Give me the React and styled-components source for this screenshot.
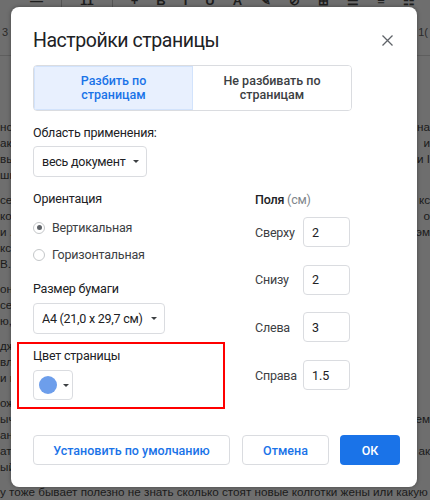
import React from 'react';
import styled, { createGlobalStyle } from 'styled-components';

const Global = createGlobalStyle`
  html, body { margin: 0; padding: 0; }
  body {
    width: 430px; height: 500px; overflow: hidden;
    background: #6f6f6f;
    font-family: Roboto, "Noto Sans", Arial, sans-serif;
  }
`;

const Screen = styled.div`
  position: relative;
  width: 430px;
  height: 500px;
  overflow: hidden;
  background: #6e6e6e;
`;

/* ---------- dimmed document behind ---------- */
const Doc = styled.div`
  display: flex;
  flex-direction: column;
  font-family: "Liberation Sans", Arial, sans-serif;
  font-size: 11.7px;
  color: #1b1b1b;
`;

const Toolbar = styled.div`
  display: flex;
  align-items: center;
  gap: 18px;
  height: 16px;
  margin-top: -8px;
  padding-left: 30px;
  font-size: 13px;
  font-weight: 700;
  color: #1e1e1e;
`;

const ToolSep = styled.span`
  width: 1px;
  height: 16px;
  background: #555;
`;

const RulerRow = styled.div`
  display: flex;
  justify-content: space-between;
  align-items: center;
  height: 48px;
  padding: 0 2px 0 2px;
  font-size: 11px;
  color: #2a2a2a;
  border-bottom: 1px solid #5e5e5e;
  box-sizing: border-box;
`;

const DocBody = styled.div`
  display: flex;
  flex-direction: column;
  gap: 9px;
  padding-top: 63px;
`;

const Para = styled.div`
  display: flex;
  flex-direction: column;
`;

const Line = styled.div`
  display: flex;
  justify-content: space-between;
  height: 16px;
  line-height: 16px;
  white-space: nowrap;
`;

const LastLine = styled.div`
  height: 16px;
  line-height: 16px;
  white-space: nowrap;
`;

/* ---------- dialog ---------- */
const Dialog = styled.div`
  position: absolute;
  top: 7px;
  left: 11px;
  width: 406px;
  height: 480px;
  box-sizing: border-box;
  padding: 0 17px 22px 22px;
  background: #fff;
  border-radius: 8px;
  box-shadow: 0 0 4px rgba(0, 0, 0, 0.35);
  display: flex;
  flex-direction: column;
  font-family: Roboto, "Noto Sans", Arial, sans-serif;
  color: #202124;
`;

const Header = styled.div`
  display: flex;
  justify-content: space-between;
  align-items: center;
  height: 28px;
  margin-top: 19px;
`;

const Title = styled.h1`
  margin: 0;
  font-size: 19.5px;
  font-weight: 400;
  color: #202124;
  letter-spacing: -0.45px;
`;

const CloseBtn = styled.button`
  width: 24px;
  height: 24px;
  margin-right: 1px;
  padding: 0;
  border: none;
  background: none;
  display: flex;
  align-items: center;
  justify-content: center;
  color: #5f6368;
`;

const Segmented = styled.div`
  display: flex;
  width: 319px;
  height: 46px;
  margin-top: 11px;
  border: 1px solid #dadce0;
  border-radius: 4px;
  box-sizing: border-box;
  overflow: hidden;
`;

const Segment = styled.div`
  flex: 0 0 ${p => (p.$active ? '159px' : 'auto')};
  flex-grow: ${p => (p.$active ? 0 : 1)};
  display: flex;
  align-items: center;
  justify-content: center;
  text-align: center;
  font-size: 12.5px;
  line-height: 14px;
  font-weight: 500;
  background: ${p => (p.$active ? '#e8f0fe' : '#fff')};
  color: ${p => (p.$active ? '#1a73e8' : '#3c4043')};
  box-shadow: ${p => (p.$active ? 'inset 0 0 0 1px #d2e3fc' : 'none')};
`;

const Body = styled.div`
  display: grid;
  grid-template-columns: 222px 1fr;
`;

const Column = styled.div`
  display: flex;
  flex-direction: column;
  align-items: flex-start;
`;

const Label = styled.div`
  font-size: 12.5px;
  letter-spacing: -0.2px;
  line-height: 18px;
  color: #202124;
  margin-top: ${p => p.$mt || 0}px;
`;

const Muted = styled.span`
  color: #80868b;
  font-weight: 400;
`;

const Strong = styled.span`
  font-weight: 500;
`;

const Dropdown = styled.div`
  display: inline-flex;
  align-items: center;
  gap: 8px;
  height: 31px;
  box-sizing: border-box;
  margin-top: ${p => p.$mt || 0}px;
  padding: 0 7px 0 8px;
  border: 1px solid #dadce0;
  border-radius: 4px;
  font-size: 12.5px;
  letter-spacing: -0.25px;
  color: #202124;
`;

const Caret = styled.span`
  width: 0;
  height: 0;
  border-left: 3.5px solid transparent;
  border-right: 3.5px solid transparent;
  border-top: 3.5px solid #3c4043;
`;

const RadioRow = styled.div`
  display: flex;
  align-items: center;
  gap: 7px;
  height: 27px;
  margin-top: ${p => p.$mt || 0}px;
  font-size: 12.5px;
  letter-spacing: -0.2px;
  color: #3c4043;
`;

const RadioCircle = styled.span`
  width: 12px;
  height: 12px;
  box-sizing: border-box;
  border-radius: 50%;
  border: 1.5px solid #c4c7c9;
  display: flex;
  align-items: center;
  justify-content: center;
  &::after {
    content: '';
    width: 5px;
    height: 5px;
    border-radius: 50%;
    background: ${p => (p.$checked ? '#5f6368' : 'transparent')};
  }
`;

const Highlight = styled.div`
  margin-top: 8px;
  margin-left: -16px;
  width: 208px;
  box-sizing: border-box;
  padding: 3px 14px 7px 14px;
  border: 2px solid #ff0000;
  display: flex;
  flex-direction: column;
  align-items: flex-start;
`;

const ColorButton = styled.div`
  display: flex;
  align-items: center;
  gap: 6px;
  width: 40px;
  height: 30px;
  box-sizing: border-box;
  margin-top: 5px;
  padding-left: 5px;
  border: 1px solid #dadce0;
  border-radius: 4px;
`;

const Swatch = styled.span`
  width: 18px;
  height: 18px;
  border-radius: 50%;
  background: ${p => p.$color};
`;

const MarginList = styled.div`
  display: flex;
  flex-direction: column;
  gap: 17.7px;
  margin-top: 8px;
`;

const MarginRow = styled.div`
  display: flex;
  align-items: center;
`;

const MarginLabel = styled.span`
  width: 48px;
  font-size: 12.5px;
  letter-spacing: -0.2px;
  color: #3c4043;
`;

const MarginInput = styled.div`
  width: 47px;
  height: 30px;
  box-sizing: border-box;
  padding-left: 8px;
  display: flex;
  align-items: center;
  border: 1px solid #dadce0;
  border-radius: 4px;
  font-size: 12.5px;
  color: #202124;
`;

const Footer = styled.div`
  display: flex;
  align-items: center;
  margin-top: auto;
  gap: 11px;
`;

const Button = styled.button`
  height: 30px;
  width: ${p => p.$w}px;
  box-sizing: border-box;
  padding: 0;
  margin-left: ${p => (p.$push ? 'auto' : '0')};
  border: ${p => (p.$primary ? 'none' : '1px solid #dadce0')};
  border-radius: 4px;
  background: ${p => (p.$primary ? '#1a73e8' : '#fff')};
  color: ${p => (p.$primary ? '#fff' : '#1a73e8')};
  font-family: Roboto, "Noto Sans", Arial, sans-serif;
  font-size: 12.5px;
  font-weight: 500;
`;

const paragraphs = [
  [['нс', 'на'], ['ак', 'и'], ['вы:', 'и I'], ['шн', '']],
  [['се', 'кс'], ['ко,', 'о'], ['и .', 'эм'], ['кс', ''], ['В.', '']],
  [['он', ''], ['се', ''], ['ю,', '']],
  [['дж', ''], ['вля', ''], ['и н', '']],
  [['ож', ''], ['ыч', 'ем'], ['ан', ''], ['ать', 'ак'], ['ый', '']],
];

const margins = [
  ['Сверху', '2'],
  ['Снизу', '2'],
  ['Слева', '3'],
  ['Справа', '1.5'],
];

export default function App() {
  return (
    <Screen>
      <Global />
      <Doc>
        <Toolbar>
          <span>—</span>
          <ToolSep />
          <span>11</span>
          <ToolSep />
          <span>+</span>
          <span>B</span>
          <span>I</span>
          <span>U</span>
          <span>A</span>
          <span>✎</span>
          <span>⊘</span>
          <span>⊞</span>
          <span>☰</span>
          <span>≡</span>
          <span>☷</span>
        </Toolbar>
        <RulerRow>
          <span>3</span>
          <span>1(</span>
        </RulerRow>
        <DocBody>
          {paragraphs.map((p, i) => (
            <Para key={i}>
              {p.map(([l, r], j) => (
                <Line key={j}>
                  <span>{l}</span>
                  <span>{r}</span>
                </Line>
              ))}
            </Para>
          ))}
          <LastLine>у тоже бывает полезно не знать сколько стоят новые колготки жены или какую</LastLine>
        </DocBody>
      </Doc>

      <Dialog>
        <Header>
          <Title>Настройки страницы</Title>
          <CloseBtn aria-label="Закрыть">
            <svg width="11" height="11" viewBox="0 0 11 11">
              <path d="M0.5 0.5 L10.5 10.5 M10.5 0.5 L0.5 10.5" stroke="#5f6368" strokeWidth="1.3" fill="none" />
            </svg>
          </CloseBtn>
        </Header>

        <Segmented>
          <Segment $active>Разбить по<br />страницам</Segment>
          <Segment>Не разбивать по<br />страницам</Segment>
        </Segmented>

        <Body>
          <Column>
            <Label $mt={13}>Область применения:</Label>
            <Dropdown $mt={4}>весь документ<Caret /></Dropdown>
            <Label $mt={13}>Ориентация</Label>
            <RadioRow $mt={6}><RadioCircle $checked />Вертикальная</RadioRow>
            <RadioRow><RadioCircle />Горизонтальная</RadioRow>
            <Label $mt={12}>Размер бумаги</Label>
            <Dropdown $mt={5}>A4 (21,0 x 29,7 см)<Caret /></Dropdown>
            <Highlight>
              <Label>Цвет страницы</Label>
              <ColorButton>
                <Swatch $color="#6d9eeb" />
                <Caret />
              </ColorButton>
            </Highlight>
          </Column>
          <Column>
            <Label $mt={80}><Strong>Поля</Strong> <Muted>(см)</Muted></Label>
            <MarginList>
              {margins.map(([name, val]) => (
                <MarginRow key={name}>
                  <MarginLabel>{name}</MarginLabel>
                  <MarginInput>{val}</MarginInput>
                </MarginRow>
              ))}
            </MarginList>
          </Column>
        </Body>

        <Footer>
          <Button $w={197}>Установить по умолчанию</Button>
          <Button $w={87} $push>Отмена</Button>
          <Button $w={60} $primary>ОК</Button>
        </Footer>
      </Dialog>
    </Screen>
  );
}
